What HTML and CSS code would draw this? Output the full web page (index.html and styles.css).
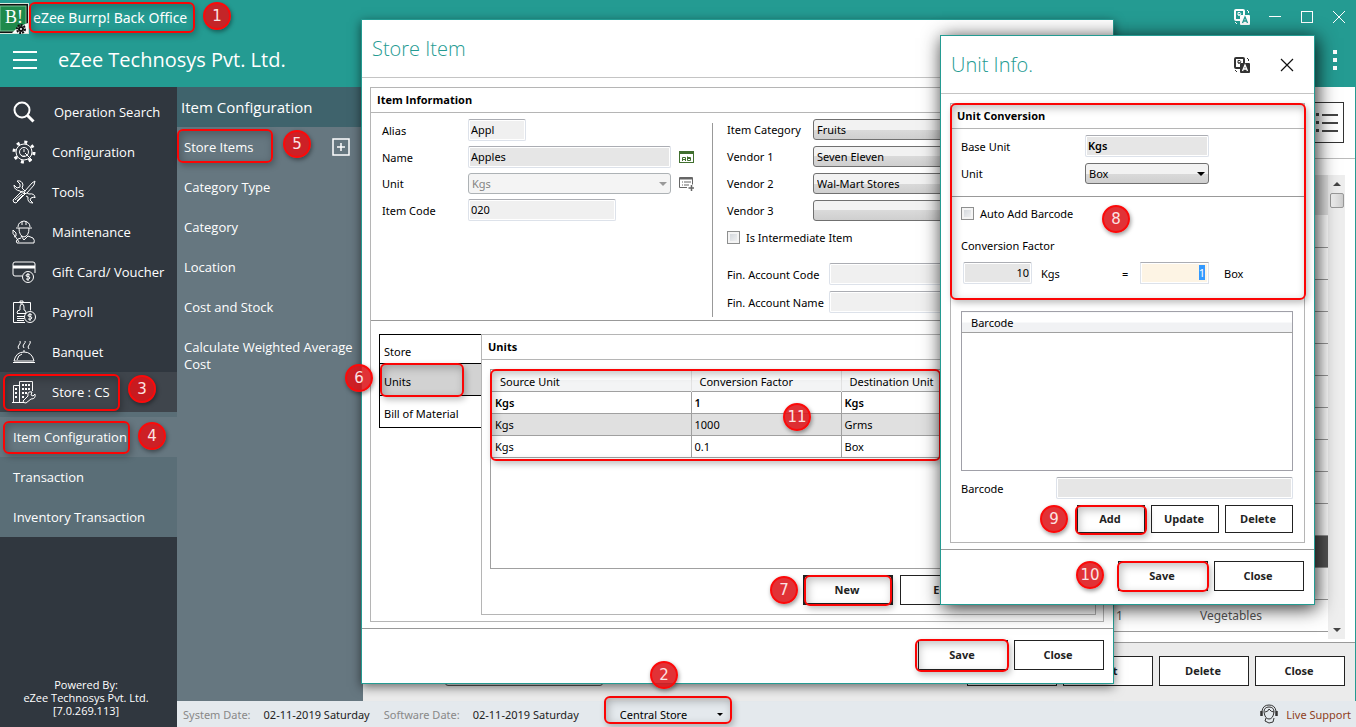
FILE: index.html
```
<!DOCTYPE html>
<html lang="en">

<head>
  <meta charset="utf-8">
  <meta name="viewport" content="width=device-width">
  <title>eZee Burrp! Back Office</title>
  <link rel="stylesheet" href="styles.css">
</head>

<body>

<header class="topbar">
  <div class="titlebar">
    <svg class="logo" width="29" height="33" viewBox="0 0 29 33">
      <rect x="0" y="2" width="29" height="31" fill="#d9e8dc"/>
      <rect x="0" y="3" width="28" height="29" fill="#111"/>
      <rect x="0" y="5" width="26" height="25" fill="#1f8a4c" stroke="#7cc196"/>
      <text x="5" y="22" class="logo-text">B!</text>
      <path d="M12 32L18 26L28 22V32Z" fill="#fff"/>
      <circle cx="21" cy="28" r="4" fill="none" stroke="#111" stroke-width="2" stroke-dasharray="2 1"/>
      <circle cx="21" cy="28" r="3" fill="#111"/><circle cx="21" cy="28" r="1" fill="#fff"/>
    </svg>
    <span class="app-name">eZee Burrp! Back Office</span>
    <div class="window-buttons">
      <button class="icon-btn" aria-label="Language">
        <svg width="16" height="16" viewBox="0 0 16 16">
          <rect x="1" y="1" width="9" height="10" rx="1" fill="none" stroke="#fff" stroke-width="2"/>
          <path d="M4 3.500h2q1.500 1 0 2.500h-2zM4 6h2.500" fill="none" stroke="#fff"/>
          <rect x="6" y="6" width="10" height="10" rx="1" fill="#fff"/>
          <path d="M8.500 14L11 8L13.500 14M9.500 12h3" fill="none" stroke="#249b92" stroke-width="1.300"/>
          <path d="M13 1l2 2M14 4l1-1M1 13l2 2" stroke="#fff"/>
        </svg>
      </button>
      <button class="icon-btn" aria-label="Minimize">
        <svg width="14" height="14" viewBox="0 0 14 14"><path d="M1 6.500h12" stroke="#fff"/></svg>
      </button>
      <button class="icon-btn" aria-label="Maximize">
        <svg width="14" height="14" viewBox="0 0 14 14"><rect x="1.500" y="1.500" width="11" height="11" fill="none" stroke="#fff"/></svg>
      </button>
      <button class="icon-btn" aria-label="Close window">
        <svg width="14" height="14" viewBox="0 0 14 14"><path d="M1 1l12 12M13 1L1 13" stroke="#fff"/></svg>
      </button>
    </div>
  </div>
  <div class="company">
    <button class="icon-btn menu-btn" aria-label="Menu">
      <svg width="24" height="18" viewBox="0 0 24 18"><path d="M0 1h24M0 9h24M0 17h24" stroke="#fff" stroke-width="2"/></svg>
    </button>
    <h1>eZee Technosys Pvt. Ltd.</h1>
    <button class="icon-btn more-btn" aria-label="More">
      <svg width="4" height="20" viewBox="0 0 4 20"><path d="M0 0h4v4H0zM0 8h4v4H0zM0 16h4v4H0z" fill="#fff"/></svg>
    </button>
  </div>
  <span class="frame frame-1"></span><span class="badge badge-1">1</span>
</header>

<div class="workspace">
  <nav class="sidebar">
    <a href="#" class="nav-item search-item">
      <svg width="24" height="24" viewBox="0 0 24 24" class="line"><circle cx="10" cy="10" r="7.500" stroke-width="2"/><path d="M15.500 15.500l6 6" stroke-width="3"/></svg>
      Operation Search</a>
    <a href="#" class="nav-item">
      <svg width="24" height="24" viewBox="0 0 24 24" class="line">
        <circle cx="12" cy="12" r="8"/>
        <circle cx="12" cy="12" r="10" stroke-width="3" stroke-dasharray="3 4.850"/>
        <circle cx="12" cy="12" r="4.500"/><path d="M12 12V9M13 13l7 7M9 15q1 2 4 1"/>
      </svg>
      Configuration</a>
    <a href="#" class="nav-item">
      <svg width="24" height="24" viewBox="0 0 24 24" class="line">
        <path d="M2 5l3 3 3-1V4L5 1q5-1 6 4l-1 3 3 3M2 5q0 5 6 6l4 3M23 1l-3 2-7 8-1 3 3-1 7-8zM12 12l-2-1-9 9q0 3 3 3l9-9zM14 16l2 1q-1 6 5 6l-3-3 1-2 3-1 1 1q0-5-6-4l-2-1"/>
        <path d="M3 20l7-6M5 21l6-6"/>
      </svg>
      Tools</a>
    <a href="#" class="nav-item">
      <svg width="24" height="24" viewBox="0 0 24 24" class="line">
        <path d="M6 7q0-5 6-6 6 1 6 6M4 8h16M7 8q0 8 5 9 5-1 5-9M10 1v4M14 1v4M9 16l3 4 4-4 5 2q2 2 1 5H5q-2-2 1-4l3-1M1 10l3 3v3L2 17M1 10q-1 4 2 6l4 6"/>
      </svg>
      Maintenance</a>
    <a href="#" class="nav-item">
      <svg width="24" height="24" viewBox="0 0 24 24" class="line">
        <path d="M10 16H3q-2 0-2-2V4q0-2 2-2h18q2 0 2 2v9"/><path d="M1 7h22" stroke-width="3"/>
        <circle cx="16" cy="17" r="5.500"/><path d="M18 15q-4-2-4 1 4 0 4 2-1 2-4 1M16 13v8"/>
      </svg>
      Gift Card/ Voucher</a>
    <a href="#" class="nav-item">
      <svg width="24" height="24" viewBox="0 0 24 24" class="line">
        <path d="M13 22.500H1.500V2.500h17v8M5 13q0-3 3-3V7q0-3 2-3t2 3v3q2 0 2 3M5 13.500h9M5 16.500h7M5 18.500h7M5 20.500h7M8 1h3v2H8z"/>
        <circle cx="18" cy="17" r="5.500"/><path d="M20 15q-4-2-4 1 4 0 4 2-1 2-4 1M18 13v8"/>
      </svg>
      Payroll</a>
    <a href="#" class="nav-item">
      <svg width="24" height="24" viewBox="0 0 24 24" class="line">
        <path d="M1 22.500h22M2 21q2-9 10-9t10 9zM12 12v-2M5 20q1-5 5-6M7 9q-2-2 0-4t1-4M12 8q-2-2 0-4t1-3M17 9q-2-2 0-4t1-4"/>
      </svg>
      Banquet</a>
    <a href="#" class="nav-item active">
      <svg width="24" height="24" viewBox="0 0 24 24" class="line">
        <path d="M1.500 22V5.500H7M7.500 22V1.500h13V11M0 22.500h12"/><path d="M10 5h9M10 9h9M10 13h5M10 17h2M3 9h3M3 13h3M3 17h3" stroke-width="2" stroke-dasharray="2 1"/>
        <path d="M11 21l5-5q-1-5 4-4l-1 3 2 1 2-2q1 5-4 5l-5 4q-3 0-3-2z"/>
      </svg>
      Store : CS</a>
    <div class="nav-children">
      <a href="#" class="selected">Item Configuration</a>
      <a href="#">Transaction</a>
      <a href="#">Inventory Transaction</a>
    </div>
    <p class="powered">Powered By:<br>eZee Technosys Pvt. Ltd.<br>[7.0.269.113]</p>
    <span class="frame frame-3"></span><span class="badge badge-3">3</span>
    <span class="frame frame-4"></span><span class="badge badge-4">4</span>
  </nav>

  <div class="content">
    <div class="panes">
      <nav class="subnav">
        <h2>Item Configuration</h2>
        <div class="subnav-first">
          <a href="#">Store Items</a>
          <button class="icon-btn" aria-label="Add store item">
            <svg width="18" height="18" viewBox="0 0 18 18"><rect x="1" y="1" width="16" height="16" fill="none" stroke="#fff" stroke-width="1.500"/><path d="M9 5v8M5 9h8" stroke="#fff" stroke-width="1.500"/></svg>
          </button>
        </div>
        <a href="#">Category Type</a>
        <a href="#">Category</a>
        <a href="#">Location</a>
        <a href="#">Cost and Stock</a>
        <a href="#">Calculate Weighted Average Cost</a>
        <span class="frame frame-5"></span><span class="badge badge-5">5</span>
      </nav>

      <main class="list-page">
        <div class="list-tools">
          <button class="view-btn" aria-label="List view">
            <svg width="26" height="22" viewBox="0 0 26 22"><path d="M10 3h16M10 11h16M10 19h16" stroke="#444" stroke-width="2"/><path d="M4 1h3v3H4zM4 9h3v3H4zM4 17h3v3H4z" fill="#444"/></svg>
          </button>
        </div>
        <div class="list-body">
          <table class="items">
            <thead><tr><th></th><th></th><th></th></tr></thead>
            <tbody>
              <tr><td></td><td></td><td></td></tr>
              <tr><td></td><td></td><td></td></tr>
              <tr><td></td><td></td><td></td></tr>
              <tr><td></td><td></td><td></td></tr>
              <tr><td></td><td></td><td></td></tr>
              <tr><td></td><td></td><td></td></tr>
              <tr><td></td><td></td><td></td></tr>
              <tr><td></td><td></td><td></td></tr>
              <tr><td></td><td></td><td></td></tr>
              <tr><td></td><td></td><td></td></tr>
              <tr class="dark"><td></td><td></td><td></td></tr>
              <tr><td></td><td></td><td></td></tr>
              <tr><td></td><td>1</td><td>Vegetables</td></tr>
            </tbody>
          </table>
          <div class="scrollbar">
            <span class="arrow up"></span>
            <span class="thumb"></span>
            <span class="arrow down"></span>
          </div>
        </div>
        <div class="list-actions">
          <select class="list-filter" aria-label="Filter"><option></option></select>
          <button class="btn">New</button>
          <button class="btn">Edit</button>
          <button class="btn">Delete</button>
          <button class="btn">Close</button>
        </div>
      </main>
    </div>

    <footer class="statusbar">
      <span>System Date:</span><b>02-11-2019 Saturday</b>
      <span>Software Date:</span><b>02-11-2019 Saturday</b>
      <div class="pick store-pick">
        <select aria-label="Store"><option>Central Store</option></select>
      </div>
      <a href="#" class="support">
        <svg width="18" height="20" viewBox="0 0 18 20" fill="none" stroke="#333">
          <path d="M2 7q1-6 7-6t7 6M4 8q0-5 5-5t5 5q-1 7-5 7T4 8zM5 8q3 0 4-3 2 3 5 3M6 14l-1 3 4 2 4-1 1-4"/>
          <path d="M1.500 7v5M16.500 7v5" stroke-width="2.500"/>
        </svg>
        Live Support</a>
      <span class="frame frame-2"></span>
    </footer>
  </div>
</div>

<!-- Store Item dialog -->
<section class="dialog store-dialog">
  <header class="dialog-head"><h2>Store Item</h2></header>
  <div class="dialog-body">
    <div class="group">
      <h3>Item Information</h3>
      <div class="item-info">
        <div class="form form-left">
          <label for="alias">Alias</label>
          <input id="alias" class="w-short" value="Appl">
          <label for="name">Name</label>
          <div class="with-icon">
            <input id="name" class="gray" value="Apples">
            <svg width="15" height="13" viewBox="0 0 15 13"><rect x=".5" y=".5" width="14" height="11" fill="#fff" stroke="#41702f"/><path d="M1 2h13" stroke="#41702f" stroke-width="2"/><path d="M3.500 10V6.500h3V10M3.500 8.500h3M8.500 5.500v4h3v-3h-3M8.500 7.500h3" fill="none" stroke="#41702f"/></svg>
          </div>
          <label for="unit">Unit</label>
          <div class="with-icon">
            <div class="pick"><select id="unit" disabled><option>Kgs</option></select></div>
            <svg width="15" height="14" viewBox="0 0 15 14" fill="none" stroke="#666"><path d="M8 10.500H.5V.5h13v7"/><path d="M1 1.500h12" stroke-width="2"/><path d="M3 5h1M5 5h7M3 8h1M5 8h5"/><path d="M12.500 8v6M9.500 11h6" stroke-width="1.500"/></svg>
          </div>
          <label for="code">Item Code</label>
          <input id="code" class="w-code" value="020">
        </div>
        <div class="form-right">
          <div class="form">
            <label for="cat">Item Category</label>
            <div class="pick"><select id="cat"><option>Fruits</option></select></div>
            <label for="v1">Vendor 1</label>
            <div class="pick"><select id="v1"><option>Seven Eleven</option></select></div>
            <label for="v2">Vendor 2</label>
            <div class="pick"><select id="v2"><option>Wal-Mart Stores</option></select></div>
            <label for="v3">Vendor 3</label>
            <div class="pick"><select id="v3"><option></option></select></div>
          </div>
          <label class="check"><input type="checkbox"> Is Intermediate Item</label>
          <div class="form accounts">
            <label for="fac">Fin. Account Code</label>
            <input id="fac">
            <label for="fan">Fin. Account Name</label>
            <input id="fan">
          </div>
        </div>
      </div>
      <div class="details">
        <div class="tabs">
          <button>Store</button>
          <button class="on">Units</button>
          <button>Bill of Material</button>
        </div>
        <div class="group units">
          <h3>Units</h3>
          <div class="grid">
            <table class="units-table">
              <thead>
                <tr><th>Source Unit</th><th>Conversion Factor</th><th>Destination Unit</th></tr>
              </thead>
              <tbody>
                <tr class="base"><td>Kgs</td><td>1</td><td>Kgs</td></tr>
                <tr class="alt"><td>Kgs</td><td>1000</td><td>Grms</td></tr>
                <tr><td>Kgs</td><td>0.1</td><td>Box</td></tr>
              </tbody>
            </table>
          </div>
          <div class="unit-actions">
            <button class="btn focus">New</button>
            <button class="btn">Edit</button>
            <button class="btn">Delete</button>
          </div>
        </div>
      </div>
    </div>
  </div>
  <footer class="dialog-foot">
    <button class="btn">Save</button>
    <button class="btn">Close</button>
  </footer>
  <span class="frame frame-6"></span><span class="badge badge-6">6</span>
  <span class="frame frame-11"></span><span class="badge badge-11">11</span>
  <span class="frame frame-7"></span><span class="badge badge-7">7</span>
  <span class="frame frame-save"></span><span class="badge badge-2">2</span>
</section>

<!-- Unit Info dialog -->
<section class="dialog unit-dialog">
  <header class="dialog-head">
    <h2>Unit Info.</h2>
    <button class="icon-btn" aria-label="Language">
      <svg width="16" height="16" viewBox="0 0 16 16">
        <rect x="1" y="1" width="9" height="10" rx="1" fill="none" stroke="#333" stroke-width="2"/>
        <path d="M4 3.500h2q1.500 1 0 2.500h-2zM4 6h2.500" fill="none" stroke="#333"/>
        <rect x="6" y="6" width="10" height="10" rx="1" fill="#333"/>
        <path d="M8.500 14L11 8L13.500 14M9.500 12h3" fill="none" stroke="#fff" stroke-width="1.300"/>
        <path d="M13 1l2 2M14 4l1-1M1 13l2 2" stroke="#333"/>
      </svg>
    </button>
    <button class="icon-btn" aria-label="Close">
      <svg width="14" height="14" viewBox="0 0 14 14"><path d="M1 1l12 12M13 1L1 13" stroke="#111" stroke-width="1.200"/></svg>
    </button>
  </header>
  <div class="dialog-body">
    <div class="group">
      <h3>Unit Conversion</h3>
      <div class="form conv-units">
        <label for="base">Base Unit</label>
        <input id="base" class="gray strong" value="Kgs">
        <label for="uunit">Unit</label>
        <div class="pick"><select id="uunit"><option>Box</option></select></div>
      </div>
      <div class="conv">
        <label class="check"><input type="checkbox"> Auto Add Barcode</label>
        <p>Conversion Factor</p>
        <div class="factor">
          <input class="gray" value="10" aria-label="Source quantity">
          <span>Kgs</span>
          <span class="equals">=</span>
          <div class="qty" role="textbox" aria-label="Destination quantity" contenteditable="true"><mark>1</mark></div>
          <span>Box</span>
        </div>
        <table class="barcodes"><thead><tr><th>Barcode</th></tr></thead><tbody><tr><td></td></tr></tbody></table>
        <div class="barcode-row">
          <label for="bar">Barcode</label>
          <input id="bar" class="gray">
        </div>
        <div class="barcode-actions">
          <button class="btn">Add</button>
          <button class="btn">Update</button>
          <button class="btn">Delete</button>
        </div>
      </div>
    </div>
  </div>
  <footer class="dialog-foot">
    <button class="btn">Save</button>
    <button class="btn">Close</button>
  </footer>
  <span class="frame frame-8"></span><span class="badge badge-8">8</span>
  <span class="frame frame-9"></span><span class="badge badge-9">9</span>
  <span class="frame frame-10"></span><span class="badge badge-10">10</span>
</section>

</body>

</html>
```
FILE: styles.css
```
* {
  box-sizing: border-box;
}

body {
  margin: 0;
  height: 100vh;
  display: flex;
  flex-direction: column;
  overflow: hidden;
  font-family: "Noto Sans", "Open Sans", sans-serif;
  font-size: 11px;
  color: #000;
}

h1, h2, h3, p {
  margin: 0;
  font-weight: normal;
}

a {
  color: inherit;
  text-decoration: none;
}

button, input, select {
  font: inherit;
  color: inherit;
}

.icon-btn {
  display: flex;
  padding: 0;
  border: 0;
  background: none;
}

.line {
  fill: none;
  stroke: #fff;
  flex: none;
}

/* top bar */
.topbar {
  position: relative;
  flex: none;
  height: 87px;
  background: #249b92;
  color: #fff;
}

.titlebar {
  display: flex;
  align-items: center;
  height: 34px;
}

.logo-text {
  font-family: "Liberation Serif", serif;
  font-size: 18px;
  fill: #fff;
}

.app-name {
  margin-left: 4px;
  font-size: 14px;
}

.window-buttons {
  display: flex;
  align-items: center;
  gap: 18px;
  margin-left: auto;
  padding-right: 10px;
}

.company {
  display: flex;
  align-items: center;
  height: 53px;
  padding: 0 19px 2px 13px;
}

.company h1 {
  margin-left: 21px;
  font-family: "Open Sans", sans-serif;
  font-size: 20px;
}

.more-btn {
  margin-left: auto;
}

/* left menu */
.workspace {
  display: flex;
  flex: 1;
  min-height: 0;
}

.sidebar {
  position: relative;
  display: flex;
  flex-direction: column;
  flex: none;
  width: 177px;
  padding-top: 5px;
  background: #30373f;
  color: #fff;
  font-family: "Open Sans", sans-serif;
  font-size: 13px;
}

.nav-item {
  display: flex;
  align-items: center;
  gap: 16px;
  height: 40px;
  padding-left: 12px;
}

.search-item {
  gap: 18px;
}

.nav-item.active {
  background: #3f454c;
}

.nav-children {
  padding-top: 5px;
  background: #5a6e77;
}

.nav-children a {
  display: flex;
  align-items: center;
  height: 40px;
  padding-left: 13px;
}

.nav-children .selected {
  background: #667780;
}

.powered {
  margin-top: auto;
  padding: 0 5px 10px 0;
  font-size: 11px;
  line-height: 13px;
  text-align: center;
}

.content {
  display: flex;
  flex-direction: column;
  flex: 1;
  min-width: 0;
}

.panes {
  display: flex;
  flex: 1;
  min-height: 0;
}

.subnav {
  position: relative;
  flex: none;
  width: 186px;
  background: #667780;
  color: #fff;
  font-family: "Open Sans", sans-serif;
  font-size: 13px;
}

.subnav h2 {
  height: 40px;
  padding-left: 4px;
  background: #3f636c;
  font-size: 15px;
  line-height: 40px;
}

.subnav a {
  display: block;
  padding: 12px 7px 11px;
  line-height: 17px;
}

.subnav-first {
  display: flex;
  align-items: center;
  justify-content: space-between;
  padding-right: 13px;
}

/* item list behind the dialogs */
.list-page {
  display: flex;
  flex-direction: column;
  flex: 1;
  min-width: 0;
  border-right: 1px solid #249b92;
  background: #fff;
}

.list-tools {
  display: flex;
  justify-content: flex-end;
  height: 72px;
  padding: 15px 11px 0 0;
  border-bottom: 1px solid #bbb;
}

.view-btn {
  display: flex;
  align-items: center;
  justify-content: flex-end;
  width: 50px;
  height: 41px;
  padding: 0 5px;
  border: 1px solid #333;
  background: #fff;
}

.list-body {
  display: flex;
  flex: 1;
  min-height: 0;
  overflow: hidden;
  padding: 16px 10px 3px 10px;
}

.items {
  flex: 1;
  height: 456px;
  border-collapse: collapse;
  color: #555;
  font-size: 12px;
}

.items th {
  height: 40px;
  background: #e0e0e0;
}

.items td {
  width: 120px;
  height: 32px;
  padding: 0;
  border-bottom: 1px solid #999;
}

.items td:first-child {
  width: auto;
}

.items td:nth-child(2) {
  width: 84px;
}

.items td:nth-child(3) {
  width: 128px;
}

.items .dark {
  background: #555;
}

.scrollbar {
  display: flex;
  flex-direction: column;
  align-items: center;
  width: 17px;
  background: #eee;
}

.scrollbar .thumb {
  width: 14px;
  height: 15px;
  border: 1px solid #999;
  border-radius: 2px;
  background: linear-gradient(90deg, #f5f5f5, #ccc);
}

.arrow {
  margin: 7px 0;
  border: 4px solid transparent;
}

.arrow.up {
  border-top: 0;
  border-bottom-color: #444;
}

.arrow.down {
  margin-top: auto;
  border-bottom: 0;
  border-top-color: #444;
}

.list-actions {
  display: flex;
  align-items: flex-start;
  gap: 6px;
  height: 59px;
  padding: 13px 10px 0 82px;
  border-top: 1px solid #999;
  background: #ebebeb;
}

.list-filter {
  width: 158px;
  height: 30px;
  margin-right: auto;
  border: 1px solid #555;
  border-radius: 3px;
  background: #e5e5e5;
}

.btn {
  width: 90px;
  height: 30px;
  padding: 0 2px 2px 0;
  border: 1px solid #222;
  background: #fff;
  color: #222;
  font-family: "Open Sans", sans-serif;
  font-weight: 700;
}

.btn.focus {
  border-width: 2px;
}

.statusbar {
  position: relative;
  display: flex;
  align-items: center;
  flex: none;
  height: 26px;
  padding: 0 5px 0 6px;
  background: #e4e9ed;
  color: #888;
}

.statusbar b {
  margin: 0 14px 0 13px;
  color: #222;
  font-weight: normal;
}

.pick {
  position: relative;
}

.pick::after {
  content: "";
  position: absolute;
  top: 9px;
  right: 4px;
  border: 4px solid transparent;
  border-top-color: #000;
  border-bottom: 0;
  pointer-events: none;
}

.pick select {
  display: block;
  appearance: none;
  width: 100%;
  height: 21px;
  padding: 0 3px;
  border: 1px solid #707070;
  border-radius: 3px;
  background: linear-gradient(#f2f2f2 50%, #dadada 50%, #cfcfcf);
}

.pick select:disabled {
  border-color: #adb2b5;
  background: #f4f4f4;
  color: #838383;
  opacity: 1;
}

.pick:has(:disabled)::after {
  border-top-color: #999;
}

.store-pick {
  width: 110px;
  margin-left: 24px;
}

.store-pick select {
  border: 0;
  background: none;
  color: #000;
}

.store-pick::after {
  border-width: 3px;
  border-bottom: 0;
}

.support {
  display: flex;
  align-items: center;
  gap: 8px;
  margin-left: auto;
  color: #8f3f1d;
}

/* dialogs */
.dialog {
  position: absolute;
  display: flex;
  flex-direction: column;
  border: 1px solid #249b92;
  background: #fff;
  box-shadow: 0 3px 10px rgba(0, 0, 0, .55);
}

.store-dialog {
  top: 19px;
  left: 361px;
  width: 753px;
}

.unit-dialog {
  top: 35px;
  left: 940px;
  width: 375px;
  box-shadow: 2px 3px 18px rgba(0, 0, 0, .85);
}

.dialog-head {
  display: flex;
  align-items: center;
  gap: 30px;
  height: 58px;
  padding: 0 20px 0 10px;
  border-bottom: 1px solid #c4c4c4;
}

.dialog-head h2 {
  flex: 1;
  color: #249b92;
  font-family: "Open Sans", sans-serif;
  font-size: 20px;
  font-weight: 350;
}

.dialog-body {
  padding: 9px 9px 6px 8px;
}

.unit-dialog .dialog-body {
  padding: 9px;
  padding-bottom: 6px;
}

.dialog-foot {
  display: flex;
  justify-content: flex-end;
  gap: 6px;
  height: 55px;
  padding: 11px 9px 0;
  border-top: 1px solid #999;
}

.unit-dialog .dialog-foot {
  padding-right: 10px;
}

.group {
  border: 1px solid #b5b5b5;
}

.group h3 {
  height: 25px;
  padding-left: 6px;
  border-bottom: 1px solid #b5b5b5;
  font-family: "Open Sans", sans-serif;
  font-size: 11px;
  font-weight: 700;
  line-height: 24px;
}

.form {
  display: grid;
  grid-template-columns: 86px 1fr;
  align-items: center;
}

input {
  height: 22px;
  min-width: 0;
  padding: 0 2px 2px;
  border: 1px solid #dde2ea;
  border-top-color: #abadb3;
  border-radius: 2px;
  background: #f0f0f0;
  box-shadow: inset 0 0 0 1px #fff;
}

input.gray {
  background: #e6e6e6;
}

input.strong {
  font-weight: 600;
}

.item-info {
  display: flex;
  height: 208px;
  padding-top: 6px;
  border-bottom: 1px solid #999;
}

.form-left {
  flex: none;
  align-content: start;
  width: 332px;
  padding-left: 11px;
  row-gap: 5px;
}

.w-short {
  width: 58px;
}

.w-code {
  width: 148px;
}

.with-icon {
  display: flex;
  align-items: center;
  gap: 8px;
}

.with-icon input, .with-icon .pick {
  width: 203px;
}

.form-right {
  flex: 1;
  height: 194px;
  margin-left: 9px;
  margin-top: 4px;
  padding: 0 8px 0 14px;
  border-left: 1px solid #999;
}

.form-right .form {
  row-gap: 6px;
  margin-top: -4px;
}

.check {
  display: flex;
  align-items: center;
  gap: 6px;
}

.check input {
  appearance: none;
  width: 13px;
  height: 13px;
  margin: 0;
  padding: 0;
  border: 1px solid #8e8f8f;
  border-radius: 0;
  background: linear-gradient(135deg, #cdd2d8, #f6f6f6);
  box-shadow: inset 0 0 0 2px #f4f4f4;
}

.form-right .check {
  margin-top: 9px;
}

.form-right .accounts {
  grid-template-columns: 102px 1fr;
  margin-top: 18px;
}

.details {
  display: flex;
  align-items: flex-start;
  padding: 13px 7px 6px 8px;
}

.tabs {
  display: flex;
  flex-direction: column;
  width: 102px;
  border: 1px solid #000;
  border-right: 0;
}

.tabs button {
  height: 32px;
  padding: 4px 4px 0;
  border: 0;
  border-top: 1px solid #000;
  background: #fff;
  text-align: left;
}

.tabs button:first-child {
  height: 28px;
  border-top: 0;
}

.tabs .on {
  background: #d2d2d2;
}

.units {
  flex: 1;
  padding-bottom: 9px;
}

.grid {
  height: 200px;
  margin: 9px 8px 6px;
  border: 1px solid #a0a0a0;
}

.units-table {
  width: 100%;
  table-layout: fixed;
  border-collapse: collapse;
}

.units-table th {
  width: 150px;
  height: 21px;
  padding: 2px 8px 0;
  border: 1px solid #e2e2e2;
  border-width: 0 1px;
  background: linear-gradient(#fff 50%, #f3f4f5 50%);
  font-weight: normal;
  text-align: left;
}

.units-table th:first-child {
  width: 200px;
  padding-left: 9px;
  border-left: 0;
}

.units-table th:last-child {
  width: auto;
}

.units-table td {
  height: 22px;
  padding: 0 3px;
  border: 1px solid #a0a0a0;
  border-width: 1px 0 1px 1px;
}

.units-table td:first-child {
  padding-left: 4px;
  border-left: 0;
}

.base {
  font-weight: 600;
}

.alt {
  background: #e0e0e0;
}

.unit-actions {
  display: flex;
  justify-content: flex-end;
  gap: 7px;
  padding-right: 8px;
}

/* unit info */
.conv-units {
  grid-template-columns: 124px 124px;
  row-gap: 6px;
  height: 68px;
  align-content: start;
  padding: 6px 0 0 10px;
  border-bottom: 1px solid #999;
}

.conv {
  padding: 9px 11px 9px 10px;
}

.conv p {
  margin: 17px 0 9px;
}

.factor {
  display: grid;
  grid-template-columns: 69px 72px 9px 69px 60px;
  column-gap: 9px;
  align-items: center;
  padding-left: 2px;
}

.factor input {
  text-align: right;
}

.qty {
  height: 22px;
  padding: 2px 3px;
  border: 1px solid #dde2ea;
  border-top-color: #abadb3;
  background: #fdf4e4;
  line-height: 15px;
  text-align: right;
  box-shadow: inset 0 0 0 1px #fff;
}

.qty mark {
  background: #3399ff;
  color: #fff;
}

.factor span:last-child {
  padding-left: 6px;
}

.barcodes {
  width: 100%;
  height: 160px;
  margin-top: 27px;
  border: 1px solid #a0a0a8;
  border-collapse: collapse;
}

.barcodes th {
  height: 21px;
  padding: 0 9px;
  border-bottom: 1px solid #a0a0a0;
  background: linear-gradient(#fff 50%, #f1f2f4 50%);
  font-weight: normal;
  text-align: left;
}

.barcode-row {
  display: grid;
  grid-template-columns: 95px 1fr;
  align-items: center;
  margin-top: 6px;
}

.barcode-actions {
  display: flex;
  justify-content: flex-end;
  gap: 6px;
  margin-top: 6px;
}

.barcode-actions .btn {
  width: 68px;
  height: 28px;
}

/* numbered call-outs, drawn over the screen */
.frame {
  position: absolute;
  border: 2px solid #fb0505;
  border-radius: 6px;
  box-shadow: 2px 3px 6px rgba(0, 0, 0, .25), inset 2px 3px 8px rgba(0, 0, 0, .25);
  pointer-events: none;
}

.badge {
  position: absolute;
  width: 28px;
  height: 28px;
  border: 2px solid #fb0a0a;
  border-radius: 50%;
  background: rgba(220, 20, 24, .87);
  color: #fbe3e3;
  font-family: "DejaVu Sans", sans-serif;
  font-size: 15px;
  line-height: 24px;
  text-align: center;
  box-shadow: 1px 2px 4px rgba(0, 0, 0, .4);
}

.frame-1 { left: 29px; top: 2px; width: 166px; height: 31px; }
.badge-1 { left: 203px; top: 2px; }
.frame-2 { left: 427px; top: -5px; width: 128px; height: 28px; }
.badge-2 { left: 288px; top: 641px; }
.frame-3 { left: 3px; top: 287px; width: 117px; height: 37px; }
.badge-3 { left: 128px; top: 288px; }
.frame-4 { left: 3px; top: 334px; width: 127px; height: 33px; }
.badge-4 { left: 138px; top: 335px; }
.frame-5 { left: 0; top: 42px; width: 96px; height: 34px; }
.badge-5 { left: 106px; top: 43px; }
.frame-6 { left: 18px; top: 343px; width: 84px; height: 34px; }
.badge-6 { left: -17px; top: 344px; }
.frame-7 { left: 442px; top: 555px; width: 88px; height: 31px; }
.badge-7 { left: 408px; top: 556px; }
.frame-save { left: 553px; top: 619px; width: 94px; height: 33px; }
.frame-8 { left: 9px; top: 67px; width: 356px; height: 197px; }
.badge-8 { left: 161px; top: 169px; }
.frame-9 { left: 134px; top: 469px; width: 72px; height: 30px; }
.badge-9 { left: 99px; top: 469px; }
.frame-10 { left: 176px; top: 525px; width: 92px; height: 31px; }
.badge-10 { left: 135px; top: 525px; }
.frame-11 { left: 128px; top: 349px; width: 451px; height: 92px; }
.badge-11 { left: 421px; top: 383px; }
```
